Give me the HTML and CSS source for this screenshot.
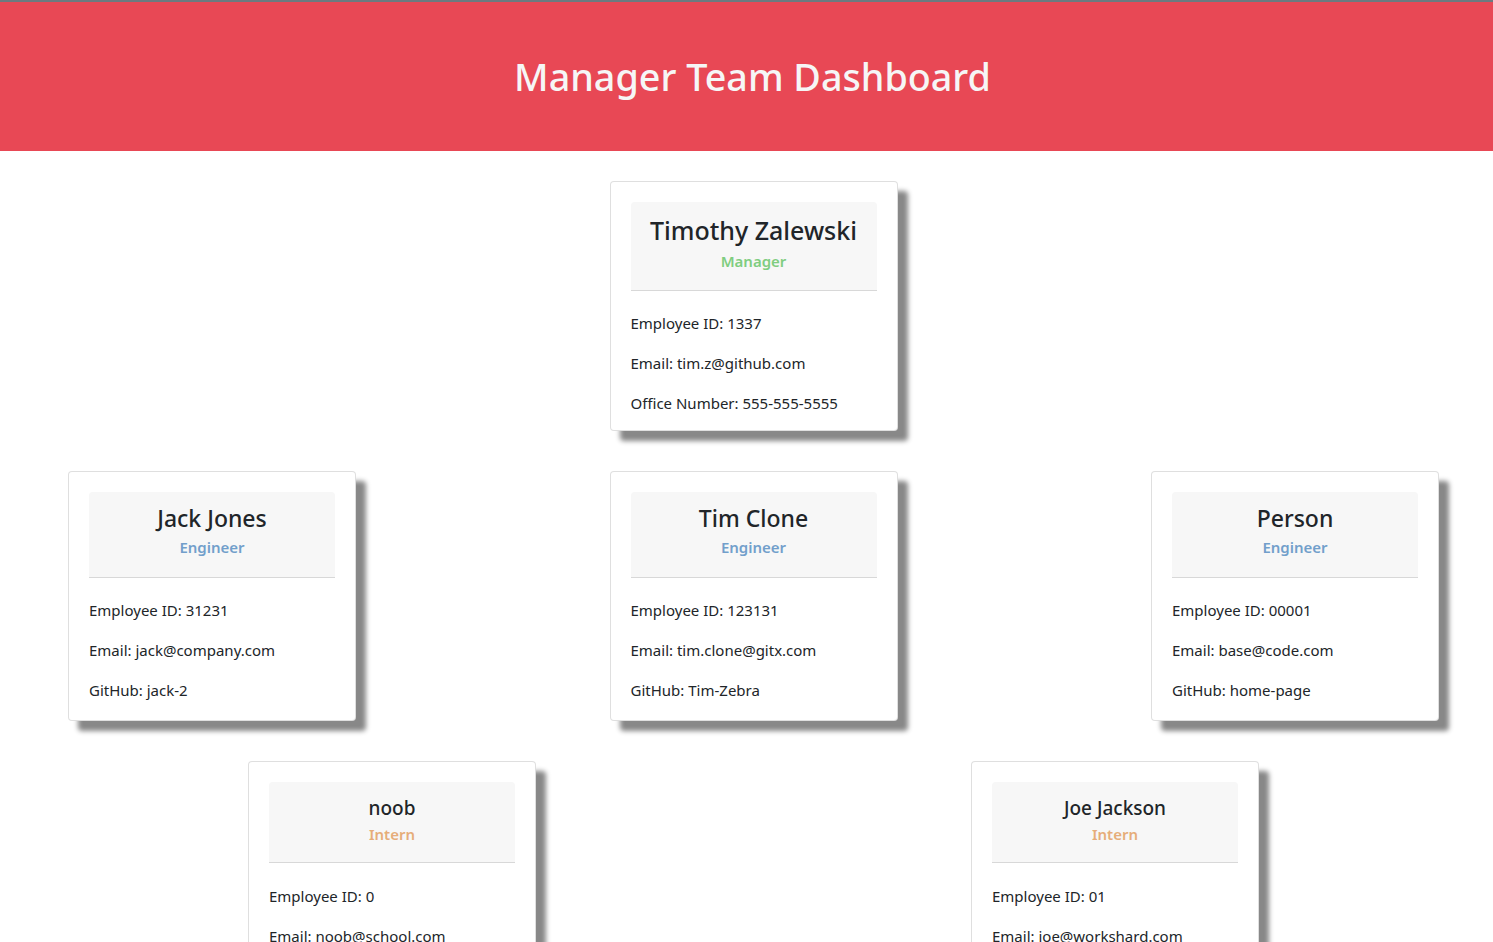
FILE: index.html
```html
<!DOCTYPE html>
<html lang="en">
<head>
<meta charset="utf-8">
<title>Manager Team Dashboard</title>
<link rel="stylesheet" href="styles.css">
</head>
<body>
<header class="banner">
  <h1 class="banner-title">Manager Team Dashboard</h1>
</header>
<main class="team">
  <section class="team-row team-row--single">
    <article class="card card--manager">
      <div class="card-head">
        <h2 class="card-name">Timothy Zalewski</h2>
        <h3 class="card-role role-manager">Manager</h3>
      </div>
      <div class="card-info">
        <p>Employee ID: 1337</p>
        <p>Email: tim.z@github.com</p>
        <p>Office Number: 555-555-5555</p>
      </div>
    </article>
  </section>
  <section class="team-row team-row--three">
    <article class="card card--engineer">
      <div class="card-head">
        <h2 class="card-name">Jack Jones</h2>
        <h3 class="card-role role-engineer">Engineer</h3>
      </div>
      <div class="card-info">
        <p>Employee ID: 31231</p>
        <p>Email: jack@company.com</p>
        <p>GitHub: jack-2</p>
      </div>
    </article>
    <article class="card card--engineer">
      <div class="card-head">
        <h2 class="card-name">Tim Clone</h2>
        <h3 class="card-role role-engineer">Engineer</h3>
      </div>
      <div class="card-info">
        <p>Employee ID: 123131</p>
        <p>Email: tim.clone@gitx.com</p>
        <p>GitHub: Tim-Zebra</p>
      </div>
    </article>
    <article class="card card--engineer">
      <div class="card-head">
        <h2 class="card-name">Person</h2>
        <h3 class="card-role role-engineer">Engineer</h3>
      </div>
      <div class="card-info">
        <p>Employee ID: 00001</p>
        <p>Email: base@code.com</p>
        <p>GitHub: home-page</p>
      </div>
    </article>
  </section>
  <section class="team-row team-row--two">
    <article class="card card--intern">
      <div class="card-head">
        <h2 class="card-name">noob</h2>
        <h3 class="card-role role-intern">Intern</h3>
      </div>
      <div class="card-info">
        <p>Employee ID: 0</p>
        <p>Email: noob@school.com</p>
      </div>
    </article>
    <article class="card card--intern">
      <div class="card-head">
        <h2 class="card-name">Joe Jackson</h2>
        <h3 class="card-role role-intern">Intern</h3>
      </div>
      <div class="card-info">
        <p>Employee ID: 01</p>
        <p>Email: joe@workshard.com</p>
      </div>
    </article>
  </section>
</main>
</body>
</html>
```
FILE: styles.css
```css
* { box-sizing: border-box; }

html, body {
  margin: 0;
  padding: 0;
  background: #ffffff;
}

body {
  font-family: "Noto Sans", "Open Sans", sans-serif;
  color: #212529;
  font-size: 15px;
  line-height: 24px;
}

.banner {
  background: #e84855;
  border-top: 2px solid #6b7a80;
  height: 151px;
  display: flex;
  align-items: center;
  justify-content: center;
}

.banner-title {
  margin: 0 0 0 12px;
  color: #f6f6f6;
  font-size: 37.7px;
  font-weight: 500;
  line-height: 46px;
}

.team {
  padding: 30px 0 0 14px;
}

.team-row {
  display: flex;
  margin-bottom: 40px;
}

.team-row--single { justify-content: center; }
.team-row--three { justify-content: space-between; padding: 0 54px; }
.team-row--two { justify-content: center; gap: 435px; }

.card {
  width: 288px;
  flex: 0 0 288px;
  border: 1px solid rgba(0, 0, 0, 0.125);
  border-radius: 4px;
  background: #fff;
  box-shadow: 10px 10px 5px #888888;
  padding: 20px 20px 0;
}

.card--manager .card-info p:last-child {
  margin-bottom: 15px;
}

.card--engineer {
  padding-bottom: 2px;
}

.card-head {
  background: #f7f7f7;
  border-bottom: 1px solid rgba(0, 0, 0, 0.125);
  border-radius: 4px 4px 0 0;
  padding: 12px 4px 11px;
  text-align: center;
}

.card-name {
  margin: 0 0 4px;
  font-size: 23px;
  font-weight: 500;
  line-height: 29px;
  color: #212529;
  white-space: nowrap;
}

.card--manager .card-name {
  font-size: 25px;
  line-height: 33px;
}

.card--engineer .card-role {
  line-height: 21px;
}

.card--intern .card-head {
  padding-top: 14px;
  padding-bottom: 10px;
}

.card--intern .card-name {
  font-size: 19px;
  line-height: 24px;
  margin-bottom: 4px;
}

.card--intern .card-info {
  padding-top: 21px;
}

.card-role {
  margin: 0 0 8px;
  font-size: 15px;
  font-weight: 600;
  line-height: 20px;
}

.role-manager { color: #7fcd80; }
.role-engineer { color: #729fcb; }
.role-intern { color: #e6ad79; }

.card-info {
  padding-top: 20px;
}

.card-info p {
  margin: 0 0 16px;
  font-size: 15px;
  line-height: 24px;
}
```
